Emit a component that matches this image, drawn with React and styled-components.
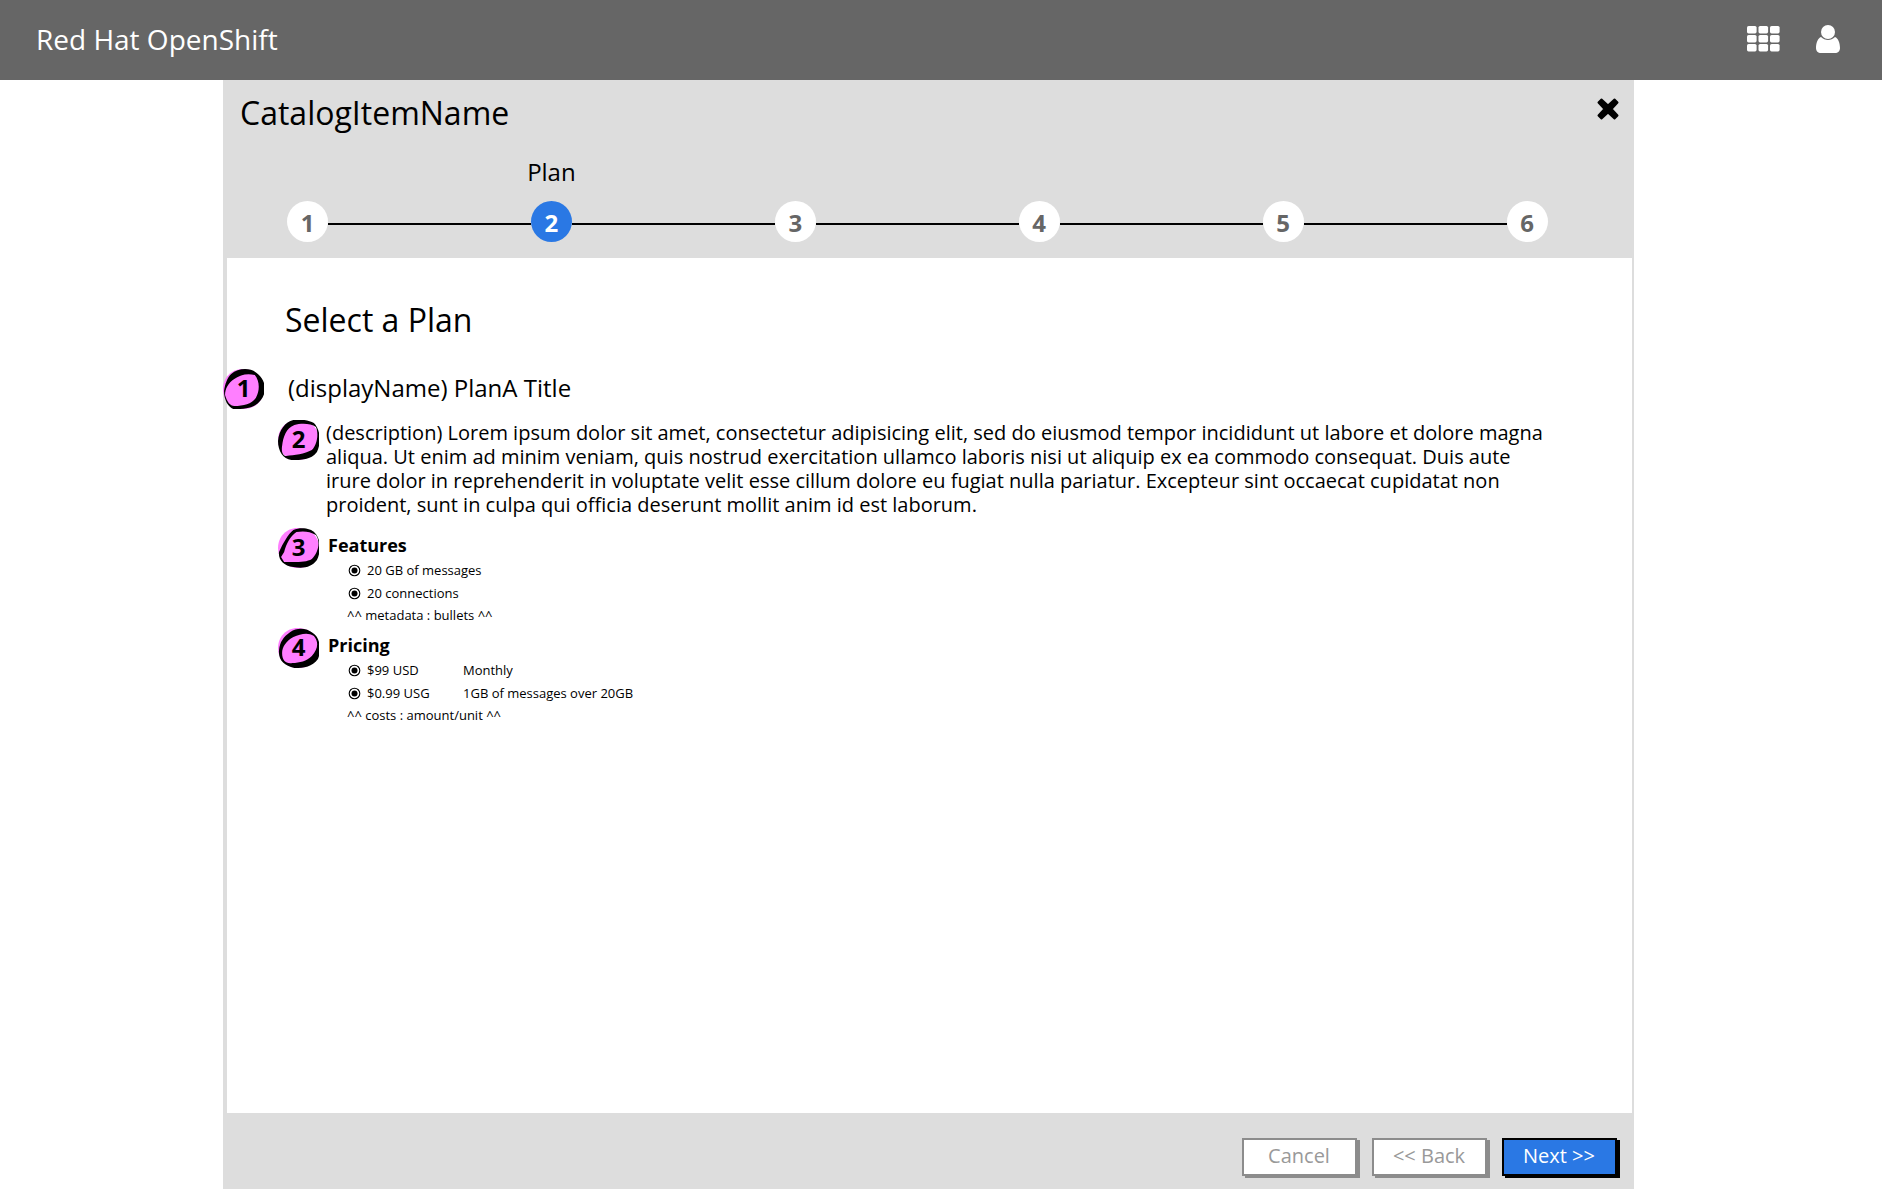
import React from "react";
import styled, { createGlobalStyle } from "styled-components";

const Global = createGlobalStyle`
  * { box-sizing: border-box; }
  body { margin: 0; background: #fff; color: #000; font-family: "Open Sans", "Noto Sans", sans-serif; }
  h1, h2, h3, h4, p, ul, ol { margin: 0; padding: 0; font-weight: 400; }
  ul, ol { list-style: none; }
  button { font-family: inherit; cursor: pointer; }
`;

const Page = styled.div`
  display: flex;
  flex-direction: column;
  min-height: 100vh;
`;

const Masthead = styled.header`
  display: flex;
  align-items: center;
  justify-content: space-between;
  height: 80px;
  padding: 0 42px 2px 36px;
  background: #666;
  color: #fff;
`;

const Brand = styled.h1`
  font-size: 28px;
  line-height: 40px;
`;

const Tools = styled.div`
  display: flex;
  align-items: center;
  gap: 36px;
`;

const IconButton = styled.button`
  display: flex;
  padding: 0;
  border: 0;
  background: none;
  color: inherit;
`;

const Wizard = styled.main`
  display: flex;
  flex: 1;
  flex-direction: column;
  width: calc(75% - 1px);
  margin-left: 223px;
  background: #ddd;
`;

const WizardHeader = styled.div`
  display: flex;
  align-items: flex-start;
  justify-content: space-between;
  padding: 11px 15px 0 17px;
`;

const WizardTitle = styled.h2`
  font-size: 32px;
  line-height: 44px;
`;

const CloseButton = styled(IconButton)`
  padding-top: 7px;
`;

const Steps = styled.ol`
  display: flex;
  padding: 17px 86px 16px 64px;
`;

const Step = styled.li`
  display: flex;
  flex: ${(p) => (p.$last ? "none" : 1)};
  align-items: flex-end;
`;

const StepMark = styled.div`
  display: flex;
  flex-direction: column;
  align-items: center;
  width: 41px;
`;

const StepLabel = styled.span`
  height: 49px;
  font-size: 24px;
  line-height: 40px;
`;

const StepCircle = styled.button`
  width: 41px;
  height: 41px;
  padding: 2px 0 0;
  border: 0;
  border-radius: 50%;
  background: ${(p) => (p.$active ? "#2a78e4" : "#fff")};
  color: ${(p) => (p.$active ? "#fff" : "#666")};
  font-size: 24px;
  font-weight: 700;
  line-height: 39px;
`;

const StepLine = styled.span`
  flex: 1;
  height: 2px;
  margin-bottom: 17px;
  background: #000;
`;

const Body = styled.section`
  flex: 1;
  margin: 0 2px 0 4px;
  padding: 40px 86px 0 0;
  background: #fff;
`;

const Heading = styled.h3`
  padding-left: 58px;
  font-size: 32px;
  line-height: 44px;
`;

const PlanRow = styled.div`
  display: flex;
  gap: ${(p) => p.$gap}px;
  margin-top: ${(p) => p.$top}px;
  margin-left: ${(p) => (p.$outer ? -4 : 51)}px;
`;

const PlanTitle = styled.h4`
  font-size: 24px;
  line-height: 38px;
`;

const Description = styled.p`
  flex: 1;
  padding-top: 1px;
  font-size: 20px;
  line-height: 24px;
`;

const Group = styled.div`
  padding-top: 5px;
`;

const GroupTitle = styled.h4`
  font-size: 18px;
  font-weight: 700;
  line-height: 24px;
`;

const List = styled.ul`
  padding: 2px 0 0 20px;
`;

const Item = styled.li`
  display: flex;
  align-items: center;
  gap: 6px;
  font-size: 13px;
  line-height: 23px;
`;

const Amount = styled.span`
  width: 90px;
`;

const Note = styled.p`
  padding-left: 19px;
  font-size: 13px;
  line-height: 20px;
`;

const BadgeFrame = styled.div`
  display: grid;
  flex: none;
  width: 41px;
  height: 40px;
  place-items: start center;
  font-size: 24px;
  font-weight: 700;
  line-height: 38px;

  > * { grid-area: 1 / 1; }
`;

const Actions = styled.footer`
  display: flex;
  justify-content: flex-end;
  gap: 12px;
  padding: 25px 14px 11px;
`;

const ActionButton = styled.button`
  width: 115px;
  height: 38px;
  margin: 0 3px 2px 0;
  padding: 0 0 2px;
  border: 2px solid ${(p) => (p.$primary ? "#000" : "#8c8c8c")};
  box-shadow: 3px 2px 0 ${(p) => (p.$primary ? "#000" : "#8c8c8c")};
  background: ${(p) => (p.$primary ? "#2a78e4" : "#fff")};
  color: ${(p) => (p.$primary ? "#fff" : "#999")};
  font-size: 20px;
  line-height: 32px;
`;

const blob = "M19 0C32 0 40 9 40 19C40 31 32 40 20 40C8 40 0 32 0 20C0 9 8 0 19 0Z";

const rings = {
  1: "M8 5C15-1 27-2 34 5C42 12 43 23 37 31C31 39 23 40 10 40C5 38 1 31 1 22C2 15 4 9 8 5ZM11 10C5 14 2 20 2 26C4 33 7 37 11 37C20 37 28 35 32 29C36 22 36 12 31 6C23 4 17 6 11 10Z",
  2: "M15 0C22-1 30 0 35 3C42 10 42 24 38 32C32 40 23 40 13 40C5 39 0 31 0 21C1 10 7 2 15 0ZM16 5C8 8 5 17 4 26C3 32 5 36 8 36C16 35 26 34 33 30C38 25 40 14 37 7C32 3 22 3 16 5Z",
  3: "M15 2C22-1 32 0 36 5C42 11 42 24 38 32C33 39 25 41 15 39C5 38 0 31 1 24C5 15 10 6 15 2ZM18 4C12 8 8 16 6 24L3 29L6 34C14 34 27 35 33 31C39 25 42 14 37 7C31 3 24 3 18 4Z",
  4: "M12 4C19-1 28 0 34 5C42 10 42 24 39 31C33 39 26 40 16 40C6 38 0 32 1 22C2 14 5 9 12 4ZM15 9C8 13 4 19 4 25C4 33 8 36 14 35C21 35 28 33 33 28C39 21 40 14 35 8C29 4 22 6 15 9Z",
};

function Badge({ n }) {
  return (
    <BadgeFrame>
      <svg width="41" height="40" viewBox="0 0 40 40" preserveAspectRatio="none" aria-hidden="true">
        <path d={blob} fill="#ff7fff" />
        <path d={rings[n]} fill="#000" fillRule="evenodd" />
      </svg>
      <span>{n}</span>
    </BadgeFrame>
  );
}

function Bullet() {
  return (
    <svg width="13" height="13" viewBox="0 0 13 13" aria-hidden="true">
      <circle cx="6.5" cy="6.5" r="5.3" fill="none" stroke="#000" strokeWidth="1.1" />
      <circle cx="6.5" cy="6.5" r="3" />
    </svg>
  );
}

const steps = [1, 2, 3, 4, 5, 6];

export default function App() {
  return (
    <Page>
      <Global />
      <Masthead>
        <Brand>Red Hat OpenShift</Brand>
        <Tools>
          <IconButton aria-label="Applications">
            <svg width="33" height="26" viewBox="0 0 33 26" fill="currentColor">
              {[0, 9, 18].map((y) =>
                [0, 11.5, 23].map((x) => <rect key={`${x}-${y}`} x={x} y={y} width="9.6" height="7.4" rx="1.6" />)
              )}
            </svg>
          </IconButton>
          <IconButton aria-label="User">
            <svg width="24" height="28" viewBox="0 0 24 28" fill="currentColor">
              <circle cx="12" cy="7" r="7" />
              <path d="M5 12C2 13 0 18 0 23C0 26 2 28 5 28H19C22 28 24 26 24 23C24 18 22 13 19 12C15 16 9 16 5 12Z" />
            </svg>
          </IconButton>
        </Tools>
      </Masthead>
      <Wizard>
        <WizardHeader>
          <WizardTitle>CatalogItemName</WizardTitle>
          <CloseButton aria-label="Close">
            <svg width="22" height="22" viewBox="0 0 22 22">
              <path
                d="M4.5 1.5L11 7.5L17.5 1.5L20.5 4.5L14.5 11L20.5 17.5L17.5 20.5L11 14.5L4.5 20.5L1.5 17.5L7.5 11L1.5 4.5Z"
                stroke="#000"
                strokeWidth="2"
                strokeLinejoin="round"
              />
            </svg>
          </CloseButton>
        </WizardHeader>
        <Steps>
          {steps.map((n) => (
            <Step key={n} $last={n === steps.length}>
              <StepMark>
                <StepLabel>{n === 2 ? "Plan" : ""}</StepLabel>
                <StepCircle $active={n === 2}>{n}</StepCircle>
              </StepMark>
              {n < steps.length && <StepLine />}
            </Step>
          ))}
        </Steps>
        <Body>
          <Heading>Select a Plan</Heading>
          <PlanRow $outer $top={27} $gap={24}>
            <Badge n={1} />
            <PlanTitle>(displayName) PlanA Title</PlanTitle>
          </PlanRow>
          <PlanRow $top={11} $gap={7}>
            <Badge n={2} />
            <Description>
              (description) Lorem ipsum dolor sit amet, consectetur adipisicing elit, sed do eiusmod tempor incididunt ut
              labore et dolore magna aliqua. Ut enim ad minim veniam, quis nostrud exercitation ullamco laboris nisi ut
              aliquip ex ea commodo consequat. Duis aute irure dolor in reprehenderit in voluptate velit esse cillum
              dolore eu fugiat nulla pariatur. Excepteur sint occaecat cupidatat non proident, sunt in culpa qui officia
              deserunt mollit anim id est laborum.
            </Description>
          </PlanRow>
          <PlanRow $top={11} $gap={9}>
            <Badge n={3} />
            <Group>
              <GroupTitle>Features</GroupTitle>
              <List>
                <Item><Bullet />20 GB of messages</Item>
                <Item><Bullet />20 connections</Item>
              </List>
              <Note>^^ metadata : bullets ^^</Note>
            </Group>
          </PlanRow>
          <PlanRow $top={3} $gap={9}>
            <Badge n={4} />
            <Group>
              <GroupTitle>Pricing</GroupTitle>
              <List>
                <Item><Bullet /><Amount>$99 USD</Amount>Monthly</Item>
                <Item><Bullet /><Amount>$0.99 USG</Amount>1GB of messages over 20GB</Item>
              </List>
              <Note>^^ costs : amount/unit ^^</Note>
            </Group>
          </PlanRow>
        </Body>
        <Actions>
          <ActionButton>Cancel</ActionButton>
          <ActionButton>&lt;&lt; Back</ActionButton>
          <ActionButton $primary>Next &gt;&gt;</ActionButton>
        </Actions>
      </Wizard>
    </Page>
  );
}
